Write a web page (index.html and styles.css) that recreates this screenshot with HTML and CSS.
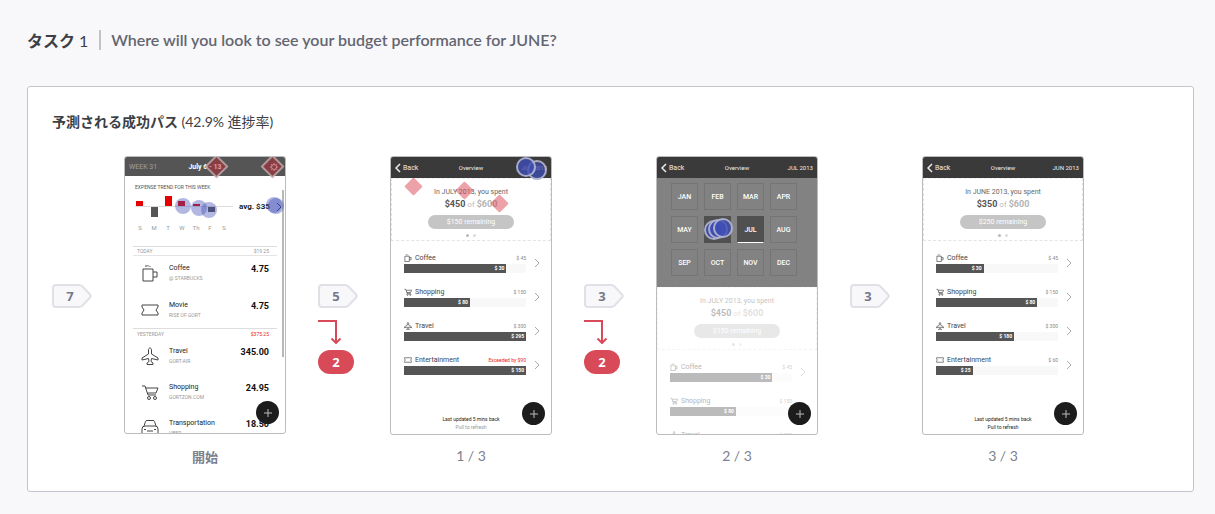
FILE: index.html
```html
<!DOCTYPE html>
<html lang="ja">
<head>
<meta charset="utf-8">
<title>タスク 1</title>
<link rel="stylesheet" href="styles.css">
</head>
<body>
<svg class="sprite" aria-hidden="true">
  <symbol id="cup" viewBox="0 0 18 18"><path d="M2 5h10v12H2zM12 8h4v5h-4M5 1v2M7 1v1.500M9 2v1"/></symbol>
  <symbol id="ticket" viewBox="0 0 18 18"><path d="M1 4h16v2l-2 3 2 3v2H1v-2l2-3-2-3z"/></symbol>
  <symbol id="plane" viewBox="0 0 18 18"><path d="M9 1c-1 0-1.500 1-1.500 2v4L1 11v2l6.500-1.500.5 3L6 16v1.500h6V16l-2-1.500.5-3L17 13v-2l-6.500-4V3c0-1-.5-2-1.500-2z"/></symbol>
  <symbol id="cart" viewBox="0 0 18 18"><path d="M1 3h3l3 9h8M5 5h12l-2 5H6.500"/><circle cx="8" cy="15" r="1.500"/><circle cx="14" cy="15" r="1.500"/></symbol>
  <symbol id="car" viewBox="0 0 18 18"><path d="M3 7l1.500-4.500q.3-1 1.500-1h6q1.200 0 1.500 1L15 7M1 15v-5q0-3 3-3h10q3 0 3 3v5zM6 12h6M3 10.500h2M13 10.500h2M3 15v2h2v-2M13 15v2h2v-2"/></symbol>
  <symbol id="back" viewBox="0 0 6 10"><path d="M5 1 1 5l4 4"/></symbol>
  <symbol id="next" viewBox="0 0 6 10"><path d="m1 1 4 4-4 4"/></symbol>
  <symbol id="plus" viewBox="0 0 10 10"><path d="M5 1v8M1 5h8"/></symbol>
  <symbol id="tag" viewBox="0 0 40 24"><path d="M4 1h23q2 0 3.500 1.500l7.500 8q1.500 1.500 0 3l-7.500 8Q29 23 27 23H4q-3 0-3-3V4q0-3 3-3z"/></symbol>
  <symbol id="exit" viewBox="0 0 24 24"><path d="M0 1h18v22M13.500 18.500 18 23l4.500-4.500"/></symbol>
</svg>

<header class="task">
  <h1 class="task-name">タスク <span class="task-number">1</span></h1>
  <p class="question">Where will you look to see your budget performance for JUNE?</p>
</header>

<main class="card">
  <h2 class="card-title">予測される成功パス <span class="rate">(42.9% 進捗率)</span></h2>
  <div class="path">

    <section class="step">
      <div class="flow">
        <div class="tag"><svg><use href="#tag"/></svg><span>7</span></div>
      </div>
      <figure class="shot">
        <div class="phone week">
          <div class="bar"><span class="week-no">WEEK 31</span><b>July 6 - 13</b>
            <svg class="gear" viewBox="0 0 12 12"><circle cx="6" cy="6" r="3"/><path d="M6 1v2M6 9v2M1 6h2M9 6h2M2.500 2.500l1.400 1.400M8.100 8.100l1.400 1.400M9.500 2.500 8.100 3.900M3.900 8.100 2.500 9.500"/></svg>
          </div>
          <div class="trend">
            <p class="trend-title">EXPENSE TREND FOR THIS WEEK</p>
            <div class="trend-row">
              <svg class="chart" viewBox="0 0 98 24"><path class="axis" d="M0 11.500h98"/><path class="over" d="M1 6h7v5H1zM30 1h7v10h-7zM43 6h7v5h-7zM58 9h7v2h-7z"/><path class="under" d="M16 12h7v10h-7zM73 12h7v5h-7z"/></svg>
              <b>avg. $35</b><svg class="chevron"><use href="#next"/></svg>
            </div>
            <div class="days"><span>S</span><span>M</span><span>T</span><span>W</span><span>Th</span><span>F</span><span>S</span></div>
          </div>
          <div class="day-head first"><span>TODAY</span><span>$19.25</span></div>
          <div class="entry"><svg><use href="#cup"/></svg><div><p>Coffee</p><small>@ STARBUCKS</small></div><b>4.75</b></div>
          <div class="entry"><svg><use href="#ticket"/></svg><div><p>Movie</p><small>RISE OF GORT</small></div><b>4.75</b></div>
          <div class="day-head"><span>YESTERDAY</span><span class="alert">$375.25</span></div>
          <div class="entry"><svg><use href="#plane"/></svg><div><p>Travel</p><small>GORT-AIR</small></div><b>345.00</b></div>
          <div class="entry"><svg><use href="#cart"/></svg><div><p>Shopping</p><small>GORTZON.COM</small></div><b>24.95</b></div>
          <div class="entry"><svg><use href="#car"/></svg><div><p>Transportation</p><small>UBER</small></div><b>18.50</b></div>
          <i class="scroll"></i>
          <button class="add" aria-label="Add"><svg><use href="#plus"/></svg></button>
          <i class="miss ring m1"></i><i class="miss ring m2"></i>
          <i class="hit h1"></i><i class="hit h2"></i><i class="hit h3"></i><i class="hit h4"></i><i class="hit h5"></i>
        </div>
        <figcaption class="first-caption">開始</figcaption>
      </figure>
    </section>

    <section class="step">
      <div class="flow">
        <div class="tag"><svg><use href="#tag"/></svg><span>5</span></div>
        <svg class="exit"><use href="#exit"/></svg><span class="lost">2</span>
      </div>
      <figure class="shot">
        <div class="phone overview">
          <div class="bar"><span class="back"><svg><use href="#back"/></svg>Back</span><span>Overview</span><span class="month">JUL 2013</span></div>
          <div class="summary"><p>In JULY 2013, you spent</p><p class="spent"><b>$450</b> of <b class="budget">$600</b></p><span class="remaining">$150 remaining</span><span class="dots"><i></i><i></i></span></div>
          <div class="list">
            <div class="item"><svg><use href="#cup"/></svg><span>Coffee</span><small>$ 45</small><div class="meter"><b style="width:84%">$ 30</b></div><svg class="chevron"><use href="#next"/></svg></div>
            <div class="item"><svg><use href="#cart"/></svg><span>Shopping</span><small>$ 150</small><div class="meter"><b style="width:54%">$ 80</b></div><svg class="chevron"><use href="#next"/></svg></div>
            <div class="item"><svg><use href="#plane"/></svg><span>Travel</span><small>$ 300</small><div class="meter"><b style="width:100%">$ 295</b></div><svg class="chevron"><use href="#next"/></svg></div>
            <div class="item"><svg><use href="#ticket"/></svg><span>Entertainment</span><small class="alert">Exceeded by $90</small><div class="meter"><b style="width:100%">$ 150</b></div><svg class="chevron"><use href="#next"/></svg></div>
          </div>
          <div class="refresh"><p>Last updated 5 mins back</p><p class="pale">Pull to refresh</p></div>
          <button class="add" aria-label="Add"><svg><use href="#plus"/></svg></button>
          <i class="miss m3"></i><i class="miss m4"></i><i class="miss m5"></i>
          <i class="hit h7"></i><i class="hit ring h8"></i><i class="hit ring h6"></i>
        </div>
        <figcaption>1 / 3</figcaption>
      </figure>
    </section>

    <section class="step">
      <div class="flow">
        <div class="tag"><svg><use href="#tag"/></svg><span>3</span></div>
        <svg class="exit"><use href="#exit"/></svg><span class="lost">2</span>
      </div>
      <figure class="shot">
        <div class="phone overview">
          <div class="bar"><span class="back"><svg><use href="#back"/></svg>Back</span><span>Overview</span><span class="month">JUL 2013</span></div>
          <div class="months"><span>JAN</span><span>FEB</span><span>MAR</span><span>APR</span><span>MAY</span><span class="dark"></span><span class="dark current">JUL</span><span>AUG</span><span>SEP</span><span>OCT</span><span>NOV</span><span>DEC</span></div>
          <div class="faded">
            <div class="summary"><p>In JULY 2013, you spent</p><p class="spent"><b>$450</b> of <b class="budget">$600</b></p><span class="remaining">$150 remaining</span><span class="dots"><i></i><i></i></span></div>
            <div class="list">
              <div class="item"><svg><use href="#cup"/></svg><span>Coffee</span><small>$ 45</small><div class="meter"><b style="width:84%">$ 30</b></div><svg class="chevron"><use href="#next"/></svg></div>
              <div class="item"><svg><use href="#cart"/></svg><span>Shopping</span><small>$ 150</small><div class="meter"><b style="width:54%">$ 80</b></div></div>
              <div class="item"><svg><use href="#plane"/></svg><span>Travel</span><small>$ 300</small></div>
            </div>
          </div>
          <button class="add" aria-label="Add"><svg><use href="#plus"/></svg></button>
          <i class="hit ring h9"></i><i class="hit ring h10"></i><i class="hit ring h11"></i>
        </div>
        <figcaption>2 / 3</figcaption>
      </figure>
    </section>

    <section class="step">
      <div class="flow">
        <div class="tag"><svg><use href="#tag"/></svg><span>3</span></div>
      </div>
      <figure class="shot">
        <div class="phone overview">
          <div class="bar"><span class="back"><svg><use href="#back"/></svg>Back</span><span>Overview</span><span class="month">JUN 2013</span></div>
          <div class="summary"><p>In JUNE 2013, you spent</p><p class="spent"><b>$350</b> of <b class="budget">$600</b></p><span class="remaining">$250 remaining</span><span class="dots"><i></i><i></i></span></div>
          <div class="list">
            <div class="item"><svg><use href="#cup"/></svg><span>Coffee</span><small>$ 45</small><div class="meter"><b style="width:39%">$ 30</b></div><svg class="chevron"><use href="#next"/></svg></div>
            <div class="item"><svg><use href="#cart"/></svg><span>Shopping</span><small>$ 150</small><div class="meter"><b style="width:83%">$ 80</b></div><svg class="chevron"><use href="#next"/></svg></div>
            <div class="item"><svg><use href="#plane"/></svg><span>Travel</span><small>$ 300</small><div class="meter"><b style="width:64%">$ 180</b></div><svg class="chevron"><use href="#next"/></svg></div>
            <div class="item"><svg><use href="#ticket"/></svg><span>Entertainment</span><small>$ 60</small><div class="meter"><b style="width:30%">$ 25</b></div><svg class="chevron"><use href="#next"/></svg></div>
          </div>
          <div class="refresh"><p>Last updated 5 mins back</p><p>Pull to refresh</p></div>
          <button class="add" aria-label="Add"><svg><use href="#plus"/></svg></button>
        </div>
        <figcaption>3 / 3</figcaption>
      </figure>
    </section>

  </div>
</main>
</body>
</html>
```
FILE: styles.css
```css
* { box-sizing: border-box; }
body {
  margin: 0;
  padding: 30px 21px 22px 27px;
  background: #f8f8fa;
  color: #3c3f46;
  font-family: Lato, "Noto Sans CJK JP", sans-serif;
}
h1, h2, p, figure { margin: 0; }
svg { fill: none; stroke: currentColor; display: block; }
.sprite { position: absolute; width: 0; height: 0; }

.task { display: flex; gap: 11px; height: 20px; margin-bottom: 36px; align-items: center; }
.task-name { font-size: 16px; line-height: 20px; font-weight: 700; padding-top: 2px; }
.task-number { font-weight: 400; }
.question {
  padding-left: 10px;
  border-left: 2px solid #c2c2c8;
  font: 600 16px/20px Lato, sans-serif;
  color: #636670;
}

.card { background: #fff; border: 1px solid #c4c4cc; border-radius: 3px; padding: 23px 24px 24px; }
.card-title { font-size: 14px; line-height: 24px; font-weight: 700; margin-bottom: 22px; }
.rate { font-weight: 400; }

.path { display: flex; gap: 32px; }
.step { display: flex; gap: 32px; }
.flow { width: 40px; padding-top: 128px; }
.tag { display: grid; width: 40px; height: 24px; color: #74798a; font: 700 13px/24px "Open Sans", sans-serif; }
.tag > * { grid-area: 1 / 1; }
.tag svg { width: 40px; height: 24px; fill: #f8f8fb; stroke: #e0e1e6; stroke-width: 2; }
.tag span { width: 36px; text-align: center; }
.exit { width: 24px; height: 24px; margin: 12px 0 6px; color: #d94a58; stroke-width: 2; }
.lost {
  display: block; width: 36px; border-radius: 12px; background: #d94a58; color: #fff;
  font: 700 13px/24px "Open Sans", sans-serif; text-align: center;
}
figcaption { text-align: center; font: 14px/20px Lato, "Noto Sans CJK JP", sans-serif; color: #7c818e; margin-top: 11px; }
.first-caption { font-size: 13px; font-weight: 700; margin-top: 13px; }

/* Phone thumbnails */
.phone {
  position: relative; display: flex; flex-direction: column; overflow: hidden;
  width: 162px; height: 279px; border: 1px solid #bcbcc0; border-radius: 3px;
  background: #fff; color: #444; font: 7px/10px Roboto, sans-serif;
}
.week { height: 278px; }
.phone > * { flex: none; }
.bar {
  display: grid; grid-template-columns: 1fr auto 1fr; align-items: center;
  height: 21px; padding: 0 4px; background: #3a3a3a; color: #eee; font-size: 6px;
}
.week .bar { height: 19px; background: #555; }
.week-no { font-size: 7px; color: #a0a0a0; }
.bar b { font-size: 7px; color: #fff; }
.gear { justify-self: end; width: 10px; height: 10px; margin-right: 2px; color: #fff; }
.back { display: flex; align-items: center; gap: 2px; }
.back svg { width: 6px; height: 10px; stroke-width: 1.5; }
.bar .back { font-size: 7px; }
.month { text-align: right; }

.trend { padding: 6px 4px 0 10px; }
.trend-title { font-size: 5px; color: #555; }
.trend-row { display: flex; align-items: center; gap: 6px; height: 30px; white-space: nowrap; }
.trend-row b { font-size: 8px; color: #222; }
.trend-row .chevron { flex: none; color: #334; }
.chart { flex: none; width: 98px; height: 24px; stroke: none; }
.axis.axis { stroke: #ddd; }
.over { fill: #e60000; }
.under { fill: #555; }
.days { display: grid; grid-template-columns: repeat(7, 14px); color: #999; text-align: center; font-size: 6px; line-height: 12px; margin-left: -2px; }
.day-head { display: flex; justify-content: space-between; margin: 0 8px; padding: 0 8px 0 4px; height: 10px; border-top: 1px solid #ddd; font-size: 5px; color: #999; }
.first { margin-top: 12px; border-bottom: 1px solid #e4e4e4; line-height: 8px; }
.alert.alert { color: #e22; }
.entry { display: flex; align-items: center; height: 36px; padding: 0 16px 0; color: #222; }
.first + .entry { padding-bottom: 2px; }
.entry svg { width: 18px; height: 18px; margin-right: 10px; color: #444; }
.entry div { flex: 1; }
.entry small { display: block; font-size: 5px; color: #999; }
.entry b { font-size: 9px; color: #111; padding-bottom: 9px; }
.chevron { width: 6px; height: 10px; color: #aaa; }
.scroll { position: absolute; right: 1px; top: 33px; width: 2px; height: 167px; background: #b8b8b8; }

.summary {
  display: flex; flex-direction: column; align-items: center; height: 63px; padding-top: 8px;
  border: 1px dashed #e4e4e4; border-top-color: #eee; color: #666;
}
.spent { font-size: 8px; line-height: 14px; color: #bbb; }
.spent b { color: #555; font-size: 9px; }
.spent .budget { color: #b4b4b4; }
.remaining { width: 86px; margin-top: 3px; border-radius: 7px; background: #c5c5c5; color: #fff; text-align: center; line-height: 14px; }
.dots { display: flex; gap: 4px; margin-top: 5px; }
.dots i { width: 3px; height: 3px; border-radius: 50%; background: #bbb; }
.dots i + i { background: #ddd; }
.list { display: grid; grid-template-rows: repeat(4, 20px); row-gap: 14px; margin-top: 12px; padding: 0 10px 0 13px; }
.item { display: grid; grid-template-columns: 8px 1fr auto 12px; grid-template-rows: 10px 10px; column-gap: 3px; align-items: center; }
.item svg { width: 8px; height: 8px; stroke-width: 1.5; }
.item small { font-size: 5px; color: #888; }
.meter { grid-column: 1 / 4; grid-row: 2; background: #f8f8f8; }
.meter b { display: block; height: 9px; line-height: 9px; padding-right: 2px; background: #555; color: #fff; font-size: 5px; text-align: right; }
.item .chevron { grid-column: 4; grid-row: 1 / 3; width: 6px; height: 10px; margin-left: 5px; stroke-width: 1; }
.refresh { margin-top: 40px; text-align: center; font-size: 5px; line-height: 8px; color: #222; }
.pale { color: #999; }
.faded { opacity: .4; }
.months {
  display: grid; grid-template-columns: repeat(4, 27px); grid-auto-rows: 27px; gap: 6px;
  height: 109px; padding: 5px 14px; background: #828282; color: #fff;
}
.months span { border: 1px solid #757575; text-align: center; line-height: 26px; font-weight: 500; }
.months .dark { background: #505050; border-color: #505050; }
.months .current { border-bottom-color: #fff; }
.add {
  position: absolute; right: 6px; bottom: 9px; display: grid; place-items: center;
  width: 23px; height: 23px; padding: 0; border: 0; border-radius: 50%; background: #1c1c1c; color: #bbb;
}
.add svg { width: 10px; height: 10px; }

/* Tap markers, placed where each participant touched the screen */
.hit, .miss { position: absolute; width: 16px; height: 16px; }
.hit { border-radius: 50%; background: rgba(62, 78, 181, .4); }
.miss { width: 13px; height: 13px; border-radius: 1px; background: rgba(217, 60, 75, .48); transform: rotate(45deg); }
.ring { border: 2px solid rgba(205, 205, 215, .75); }
.hit.ring { width: 20px; height: 20px; background: rgba(62, 78, 181, .8); }
.miss.ring { width: 17px; height: 17px; border-color: rgba(190, 175, 175, .8); background: rgba(190, 35, 50, .48); }
.m1 { left: 83px; top: 1px; }
.m2 { left: 139px; top: 1px; }
.h1 { left: 50px; top: 41px; }
.h2 { left: 66px; top: 43px; }
.h3 { left: 76px; top: 45px; }
.h4 { left: 143px; top: 41px; }
.h5 { left: 141px; top: 40px; }
.m3 { left: 16px; top: 23px; }
.m4 { left: 67px; top: 27px; }
.m5 { left: 102px; top: 40px; }
.h6 { left: 125px; top: 0; }
.h7 { left: 138px; top: 7px; }
.hit.h8 { left: 136px; top: 3px; background: rgba(62, 78, 181, .6); }
.h9 { left: 47px; top: 63px; }
.h10 { left: 51px; top: 62px; }
.h11 { left: 56px; top: 61px; }
```
